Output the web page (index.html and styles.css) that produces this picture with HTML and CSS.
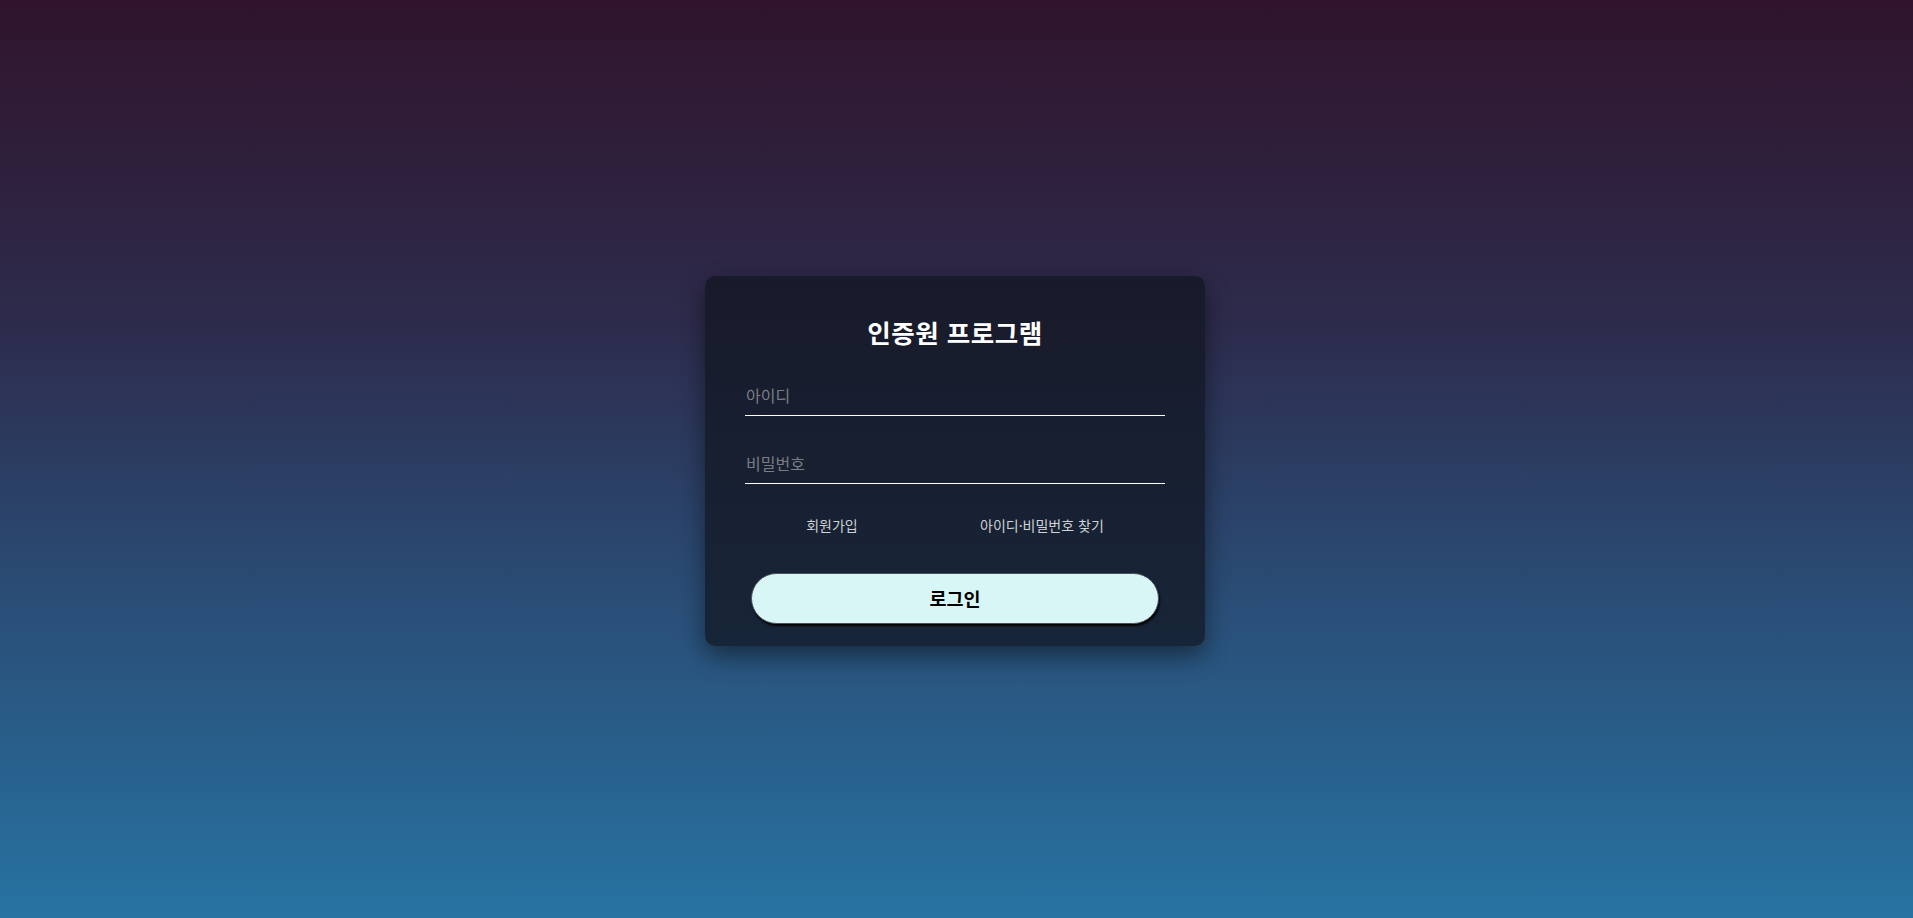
FILE: index.html
```html
<!DOCTYPE html>
<html lang="ko">
<head>
<meta charset="utf-8">
<title>인증원 프로그램</title>
<link rel="stylesheet" href="styles.css">
</head>
<body>
<main class="page">
  <form class="card" onsubmit="return false">
    <h1 class="title">인증원 프로그램</h1>
    <input class="field" type="text" placeholder="아이디">
    <input class="field" type="password" placeholder="비밀번호">
    <div class="links">
      <a class="link" href="#">회원가입</a>
      <a class="link" href="#">아이디·비밀번호 찾기</a>
    </div>
    <button class="login" type="submit">로그인</button>
  </form>
</main>
</body>
</html>
```

FILE: styles.css
```css
html, body {
  margin: 0;
  padding: 0;
  height: 100%;
}

body {
  font-family: "Noto Sans CJK KR", "Noto Sans", sans-serif;
  background: linear-gradient(180deg, #30142c 0%, #2d2b4c 35%, #2a4d76 65%, #2773a2 100%);
}

.page {
  box-sizing: border-box;
  height: 918px;
  padding-right: 3px;
  display: flex;
  align-items: center;
  justify-content: center;
}

.card {
  box-sizing: border-box;
  width: 500px;
  height: 370px;
  margin-top: 3px;
  padding: 40px 40px 22px 40px;
  display: flex;
  flex-direction: column;
  border-radius: 10px;
  background: linear-gradient(180deg, #181a2a 0%, #172538 100%);
  box-shadow: 0 10px 24px rgba(0, 0, 0, 0.45);
}

.title {
  margin: 0;
  height: 32px;
  line-height: 32px;
  font-size: 25.5px;
  font-weight: 700;
  color: #ffffff;
  text-align: center;
  letter-spacing: 0.5px;
}

.field {
  box-sizing: border-box;
  width: 420px;
  height: 40px;
  margin: 28px 0 0 0;
  padding: 0 1px;
  border: none;
  border-bottom: 1px solid #ffffff;
  background: transparent;
  color: #ffffff;
  font-family: inherit;
  font-size: 16px;
  outline: none;
}

.field::placeholder {
  color: #7b7d84;
}

.links {
  width: 420px;
  height: 20px;
  margin-top: 31px;
  display: flex;
  justify-content: space-around;
  align-items: center;
}

.link {
  color: #cfd2d6;
  font-size: 14px;
  text-decoration: none;
  line-height: 20px;
}

.login {
  box-sizing: border-box;
  width: 408px;
  height: 51px;
  margin: 38px 0 0 6px;
  border: 1px solid #4a5058;
  border-radius: 26px;
  background: #d9f6f6;
  color: #000000;
  font-family: inherit;
  font-size: 18.5px;
  font-weight: 700;
  box-shadow: 1px 2px 2px rgba(0, 0, 0, 0.95);
  cursor: pointer;
}
```
